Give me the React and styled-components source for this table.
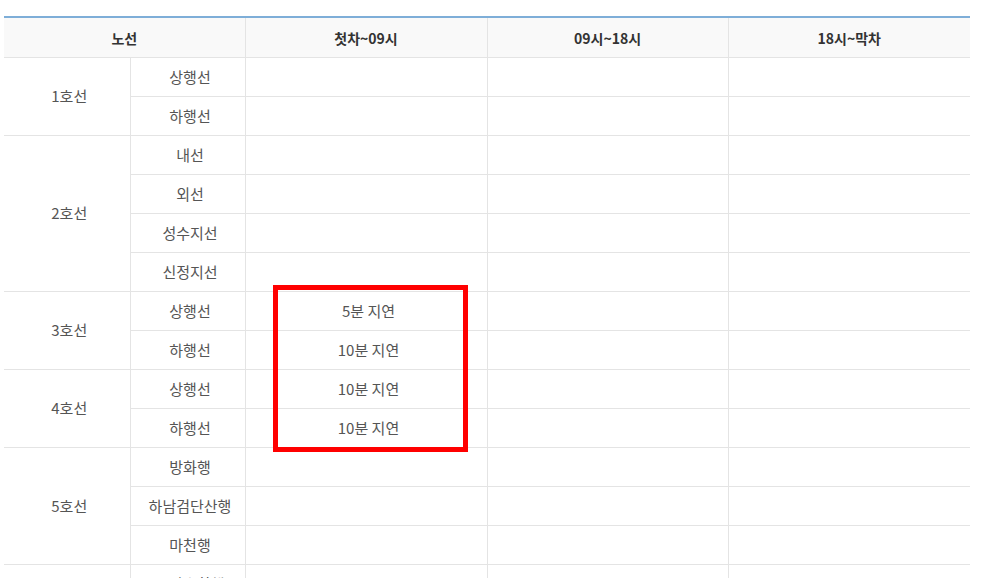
import styled, { createGlobalStyle } from 'styled-components';

const GlobalStyle = createGlobalStyle`
  html, body {
    margin: 0;
    padding: 0;
    background: #fff;
  }
  body {
    font-family: "Noto Sans CJK KR", "Noto Sans", sans-serif;
    color: #555;
  }
`;

const Wrap = styled.div`
  position: relative;
  padding: 16px 24px 0 4px;
  height: 578px;
  box-sizing: border-box;
  overflow: hidden;
`;

const Table = styled.table`
  width: 966px;
  border-collapse: collapse;
  table-layout: fixed;
  border-top: 2px solid #7eaed8;
  font-size: 15px;
`;

const Th = styled.th`
  height: 39px;
  padding: 0;
  background: #f9f9f9;
  color: #333;
  font-weight: 700;
  font-size: 14px;
  text-align: center;
  border-bottom: 1px solid #e4e4e4;
  border-left: ${(p) => (p.$first ? 'none' : '1px solid #e4e4e4')};
`;

const Td = styled.td`
  height: 36px;
  padding: 0 0 2px 5px;
  color: #555;
  font-size: 15px;
  text-align: center;
  vertical-align: middle;
  border-bottom: 1px solid #e4e4e4;
  border-left: ${(p) => (p.$first ? 'none' : '1px solid #e4e4e4')};
`;

const Highlight = styled.div`
  position: absolute;
  left: 273px;
  top: 285px;
  width: 195px;
  height: 167px;
  box-sizing: border-box;
  border: 5px solid #ff0000;
  pointer-events: none;
`;

const lines = [
  { name: '1호선', dirs: ['상행선', '하행선'] },
  { name: '2호선', dirs: ['내선', '외선', '성수지선', '신정지선'] },
  { name: '3호선', dirs: ['상행선', '하행선'] },
  { name: '4호선', dirs: ['상행선', '하행선'] },
  { name: '5호선', dirs: ['방화행', '하남검단산행', '마천행'] },
  { name: '6호선', dirs: ['응암순환행', '신내행'] },
];

const delays = {
  '3호선-상행선': '5분 지연',
  '3호선-하행선': '10분 지연',
  '4호선-상행선': '10분 지연',
  '4호선-하행선': '10분 지연',
};

export default function App() {
  return (
    <>
      <GlobalStyle />
      <Wrap>
        <Table>
          <colgroup>
            <col style={{ width: 126 }} />
            <col style={{ width: 115 }} />
            <col style={{ width: 242 }} />
            <col style={{ width: 241 }} />
            <col style={{ width: 242 }} />
          </colgroup>
          <thead>
            <tr>
              <Th $first colSpan={2}>노선</Th>
              <Th>첫차~09시</Th>
              <Th>09시~18시</Th>
              <Th>18시~막차</Th>
            </tr>
          </thead>
          <tbody>
            {lines.map((line) =>
              line.dirs.map((dir, i) => (
                <tr key={line.name + dir}>
                  {i === 0 && (
                    <Td $first rowSpan={line.dirs.length}>
                      {line.name}
                    </Td>
                  )}
                  <Td>{dir}</Td>
                  <Td>{delays[`${line.name}-${dir}`] || ''}</Td>
                  <Td />
                  <Td />
                </tr>
              ))
            )}
          </tbody>
        </Table>
        <Highlight />
      </Wrap>
    </>
  );
}
